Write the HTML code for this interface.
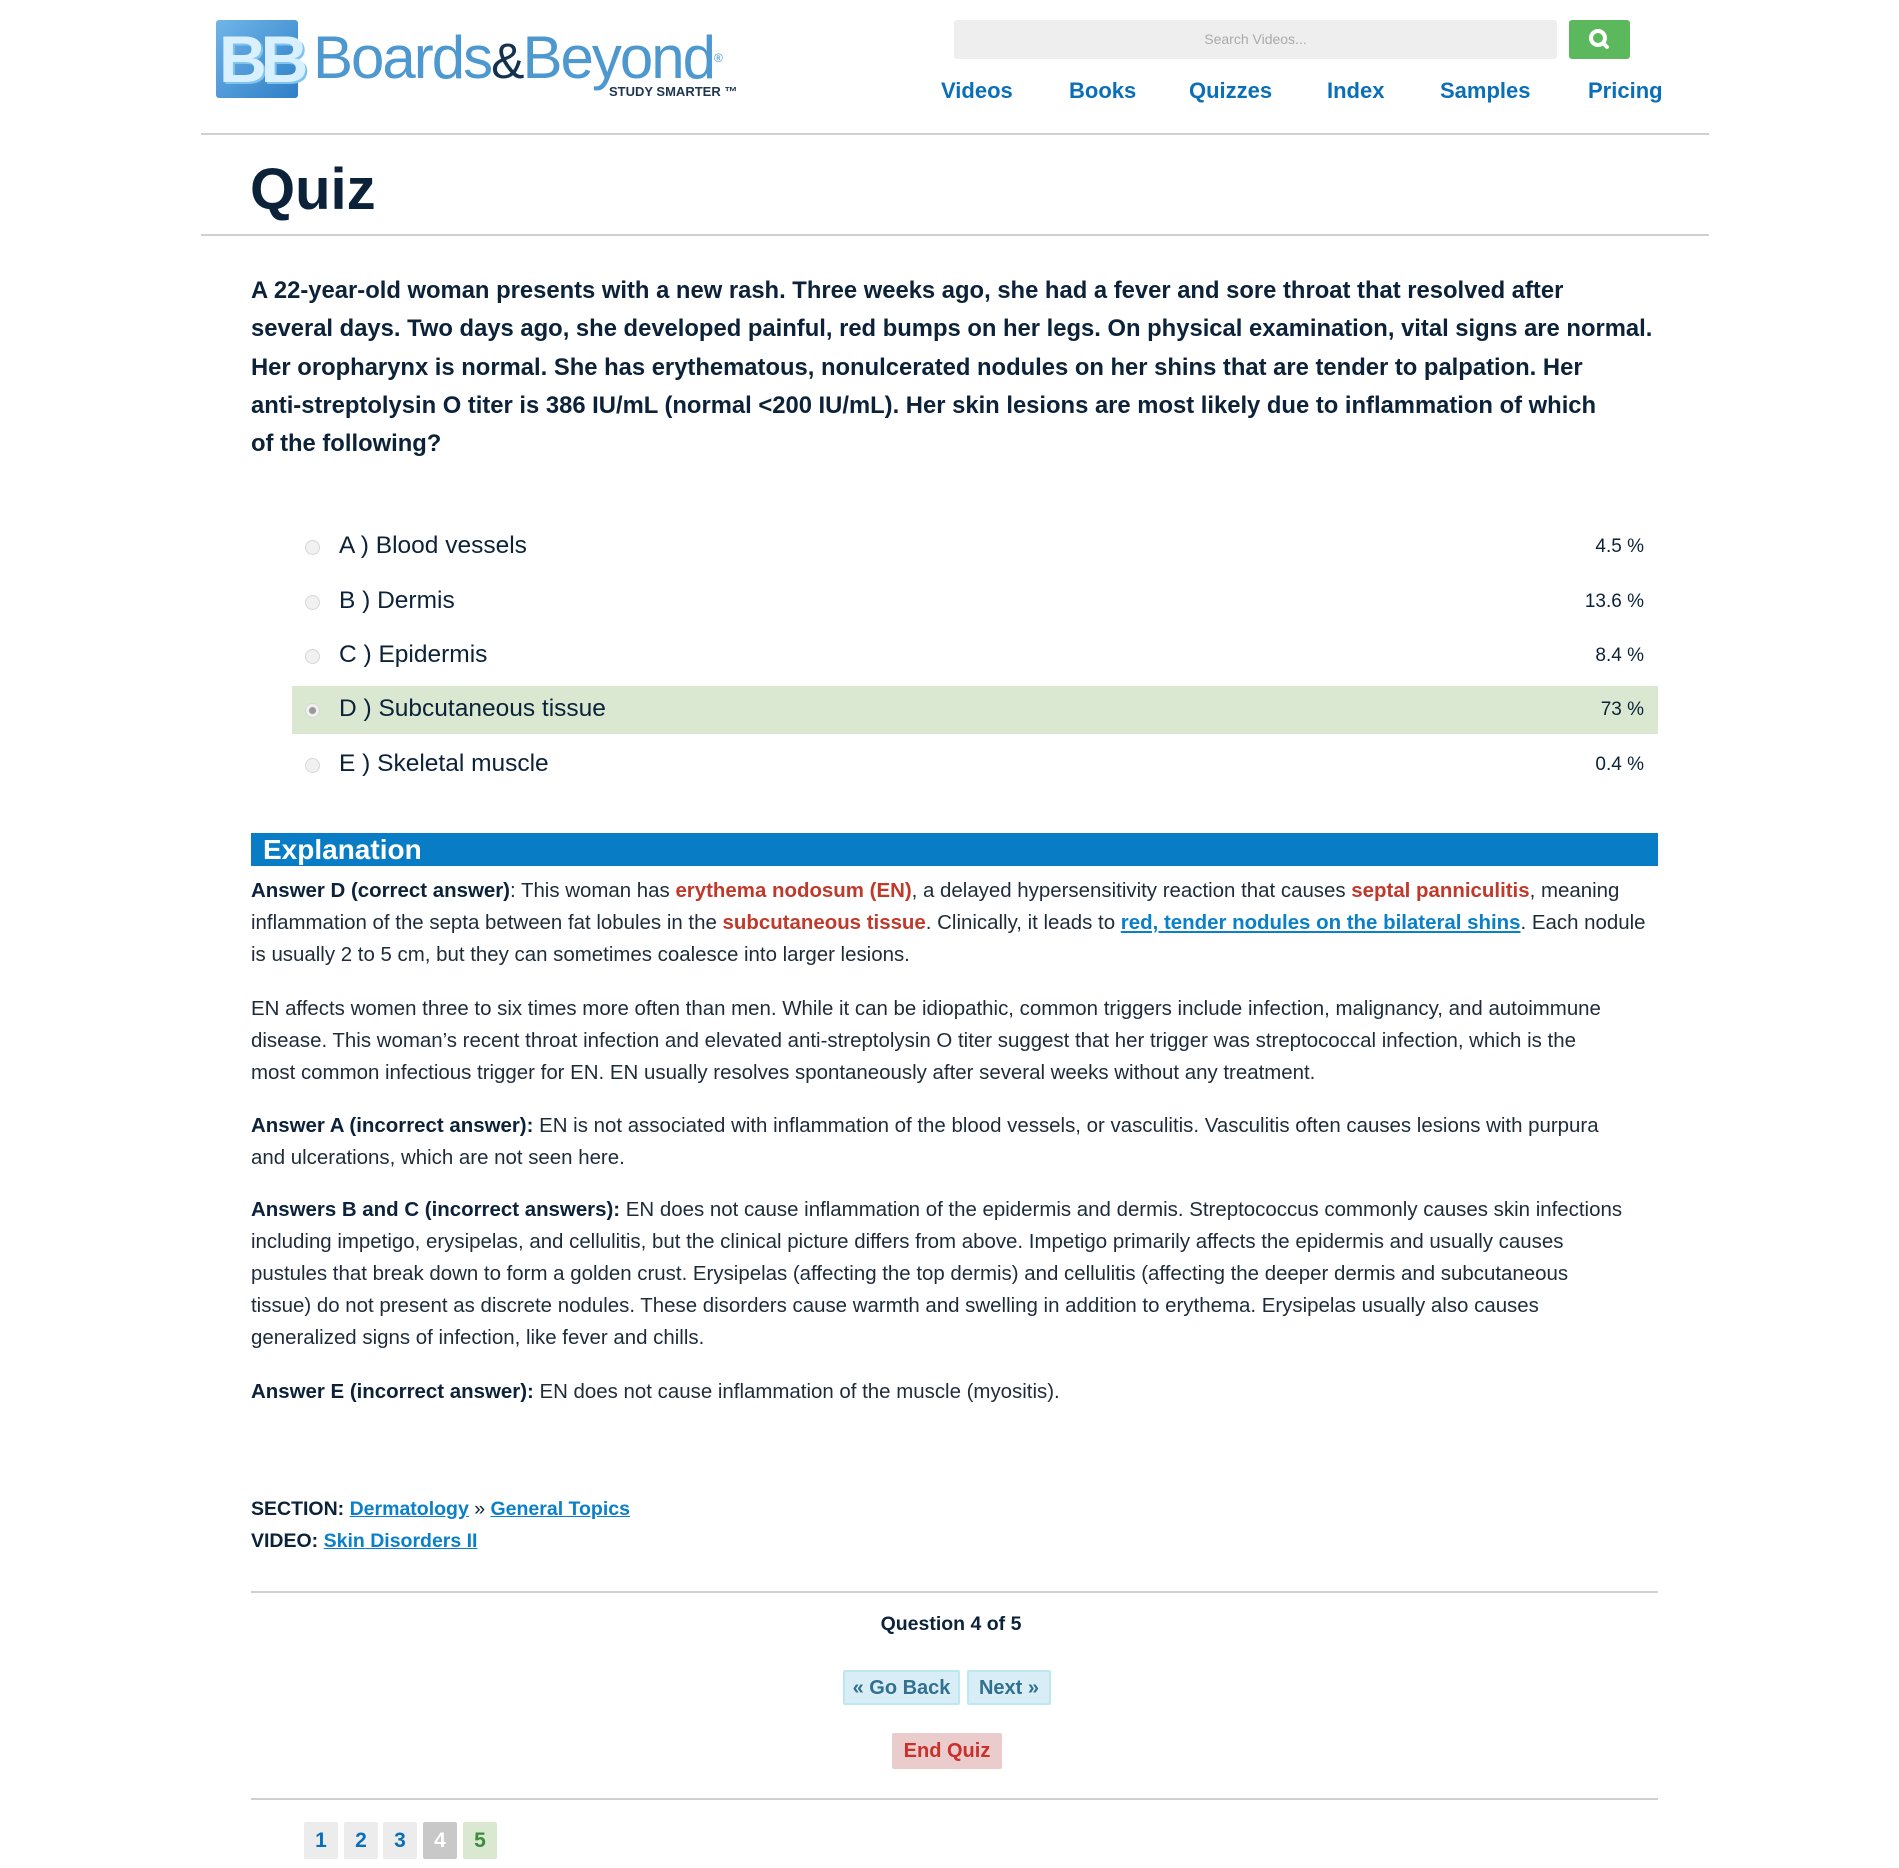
<!DOCTYPE html>
<html><head><meta charset="utf-8">
<style>
*{margin:0;padding:0;box-sizing:border-box}
body{width:1899px;height:1868px;background:#fff;font-family:"Liberation Sans",sans-serif;color:#0b2239;position:relative;overflow:hidden}
.abs{position:absolute}
.nav a{position:absolute;top:78px;font-size:22px;font-weight:bold;color:#0a6fb8;text-decoration:none;white-space:nowrap}
.hr{position:absolute;height:2px;background:#d0d0d0}
.q{position:absolute;left:251px;top:272px;font-size:23.8px;font-weight:bold;line-height:38.3px;white-space:nowrap;color:#0b2239}
.opt{position:absolute;left:292px;width:1366px;height:48px;font-size:24.5px;color:#0b2239}
.opt .r{position:absolute;left:13px;top:17px;width:15px;height:15px;border-radius:50%;border:1px solid #d6d6d6;background:#f1f1f1}
.opt .t{position:absolute;left:47px;top:9px;white-space:nowrap}
.opt .p{position:absolute;right:14px;top:13px;font-size:19px}
.body{position:absolute;left:251px;font-size:20.45px;line-height:32px;color:#1d2b3a;white-space:nowrap}
.body b{color:#0b2239}
.red{color:#c0392b;font-weight:bold}
.lnk{color:#0a80c8;font-weight:bold;text-decoration:underline}
.btn{position:absolute;font-size:20px;font-weight:bold;text-align:center;border-radius:2px}
.pg{position:absolute;top:1822px;width:34px;height:37px;border-radius:2px;background:#ececec;color:#0a6fb8;font-weight:bold;font-size:21px;text-align:center;line-height:37px}
</style></head><body>
<!-- logo -->
<div class="abs" style="left:216px;top:20px;width:82px;height:78px;background:linear-gradient(135deg,#6fb5e8,#2f7fc7);border-radius:3px"></div>
<div class="abs" style="left:219px;top:22px;font-size:66px;font-weight:bold;color:#d8f0ff;letter-spacing:-6px;line-height:74px;text-shadow:2px 2px 0 #7fc4ee">BB</div>
<div class="abs" style="left:313px;top:18px;font-size:60px;color:#4c98cf;letter-spacing:-2px;line-height:80px;white-space:nowrap">Boards<span style="color:#13324f;font-size:50px">&amp;</span>Beyond<span style="font-size:12px;vertical-align:top">®</span></div>
<div class="abs" style="left:609px;top:84px;font-size:13px;color:#1d3550;font-weight:bold;white-space:nowrap">STUDY SMARTER ™</div>
<!-- search -->
<div class="abs" style="left:954px;top:20px;width:603px;height:39px;background:#eeeeee;border-radius:3px;font-size:14px;color:#aaa;text-align:center;line-height:39px">Search Videos...</div>
<div class="abs" style="left:1569px;top:20px;width:61px;height:39px;background:#5cb85c;border-radius:3px">
<svg width="61" height="39"><circle cx="29" cy="18" r="7" fill="none" stroke="#fff" stroke-width="4"/><line x1="34" y1="23" x2="38" y2="27" stroke="#fff" stroke-width="4" stroke-linecap="round"/></svg></div>
<div class="nav">
<a style="left:941px">Videos</a><a style="left:1069px">Books</a><a style="left:1189px">Quizzes</a><a style="left:1327px">Index</a><a style="left:1440px">Samples</a><a style="left:1588px">Pricing</a>
</div>
<div class="hr" style="left:201px;top:133px;width:1508px"></div>
<div class="abs" style="left:250px;top:155px;font-size:58px;font-weight:bold;color:#0b2239;line-height:70px">Quiz</div>
<div class="hr" style="left:201px;top:234px;width:1508px"></div>

<div class="q">A 22-year-old woman presents with a new rash. Three weeks ago, she had a fever and sore throat that resolved after<br>several days. Two days ago, she developed painful, red bumps on her legs. On physical examination, vital signs are normal.<br>Her oropharynx is normal. She has erythematous, nonulcerated nodules on her shins that are tender to palpation. Her<br>anti-streptolysin O titer is 386 IU/mL (normal &lt;200 IU/mL). Her skin lesions are most likely due to inflammation of which<br>of the following?</div>

<div class="opt" style="top:523px"><span class="r"></span><span class="t">A ) Blood vessels</span><span class="p">4.5 %</span></div>
<div class="opt" style="top:578px"><span class="r"></span><span class="t">B ) Dermis</span><span class="p">13.6 %</span></div>
<div class="opt" style="top:632px"><span class="r"></span><span class="t">C ) Epidermis</span><span class="p">8.4 %</span></div>
<div class="opt" style="top:686px;background:#dae8d2"><span class="r" style="background:radial-gradient(circle,#999 0 3px,#f1f1f1 4px)"></span><span class="t">D ) Subcutaneous tissue</span><span class="p">73 %</span></div>
<div class="opt" style="top:741px"><span class="r"></span><span class="t">E ) Skeletal muscle</span><span class="p">0.4 %</span></div>

<div class="abs" style="left:251px;top:833px;width:1407px;height:33px;background:#087dc5;color:#fff;font-size:28px;font-weight:bold;padding-left:12px;line-height:33px">Explanation</div>

<div class="body" style="top:875px"><b>Answer D (correct answer)</b>: This woman has <span class="red">erythema nodosum (EN)</span>, a delayed hypersensitivity reaction that causes <span class="red">septal panniculitis</span>, meaning<br>inflammation of the septa between fat lobules in the <span class="red">subcutaneous tissue</span>. Clinically, it leads to <span class="lnk">red, tender nodules on the bilateral shins</span>. Each nodule<br>is usually 2 to 5 cm, but they can sometimes coalesce into larger lesions.</div>
<div class="body" style="top:993px">EN affects women three to six times more often than men. While it can be idiopathic, common triggers include infection, malignancy, and autoimmune<br>disease. This woman’s recent throat infection and elevated anti-streptolysin O titer suggest that her trigger was streptococcal infection, which is the<br>most common infectious trigger for EN. EN usually resolves spontaneously after several weeks without any treatment.</div>
<div class="body" style="top:1110px"><b>Answer A (incorrect answer):</b> EN is not associated with inflammation of the blood vessels, or vasculitis. Vasculitis often causes lesions with purpura<br>and ulcerations, which are not seen here.</div>
<div class="body" style="top:1194px"><b>Answers B and C (incorrect answers):</b> EN does not cause inflammation of the epidermis and dermis. Streptococcus commonly causes skin infections<br>including impetigo, erysipelas, and cellulitis, but the clinical picture differs from above. Impetigo primarily affects the epidermis and usually causes<br>pustules that break down to form a golden crust. Erysipelas (affecting the top dermis) and cellulitis (affecting the deeper dermis and subcutaneous<br>tissue) do not present as discrete nodules. These disorders cause warmth and swelling in addition to erythema. Erysipelas usually also causes<br>generalized signs of infection, like fever and chills.</div>
<div class="body" style="top:1376px"><b>Answer E (incorrect answer):</b> EN does not cause inflammation of the muscle (myositis).</div>

<div class="body" style="top:1493px;font-weight:bold;color:#0b2239;font-size:19.5px">SECTION: <span class="lnk">Dermatology</span> <span style="font-weight:normal">»</span> <span class="lnk">General Topics</span><br>VIDEO: <span class="lnk">Skin Disorders II</span></div>

<div class="hr" style="left:251px;top:1591px;width:1407px"></div>
<div class="abs" style="left:251px;width:1400px;top:1613px;text-align:center;font-size:19.5px;font-weight:bold">Question 4 of 5</div>
<div class="btn" style="left:843px;top:1670px;width:117px;height:35px;line-height:33px;background:#d9edf7;border:2px solid #bce8f1;color:#31708f">« Go Back</div>
<div class="btn" style="left:967px;top:1670px;width:84px;height:35px;line-height:33px;background:#d9edf7;border:2px solid #bce8f1;color:#31708f">Next »</div>
<div class="btn" style="left:892px;top:1733px;width:110px;height:36px;line-height:36px;background:#ebcccc;color:#c9302c">End Quiz</div>
<div class="hr" style="left:251px;top:1798px;width:1407px"></div>
<div class="pg" style="left:304px">1</div>
<div class="pg" style="left:344px">2</div>
<div class="pg" style="left:383px">3</div>
<div class="pg" style="left:423px;background:#c8c8c8;color:#fff">4</div>
<div class="pg" style="left:463px;background:#dae8d2;color:#3c8b3c">5</div>
</body></html>
